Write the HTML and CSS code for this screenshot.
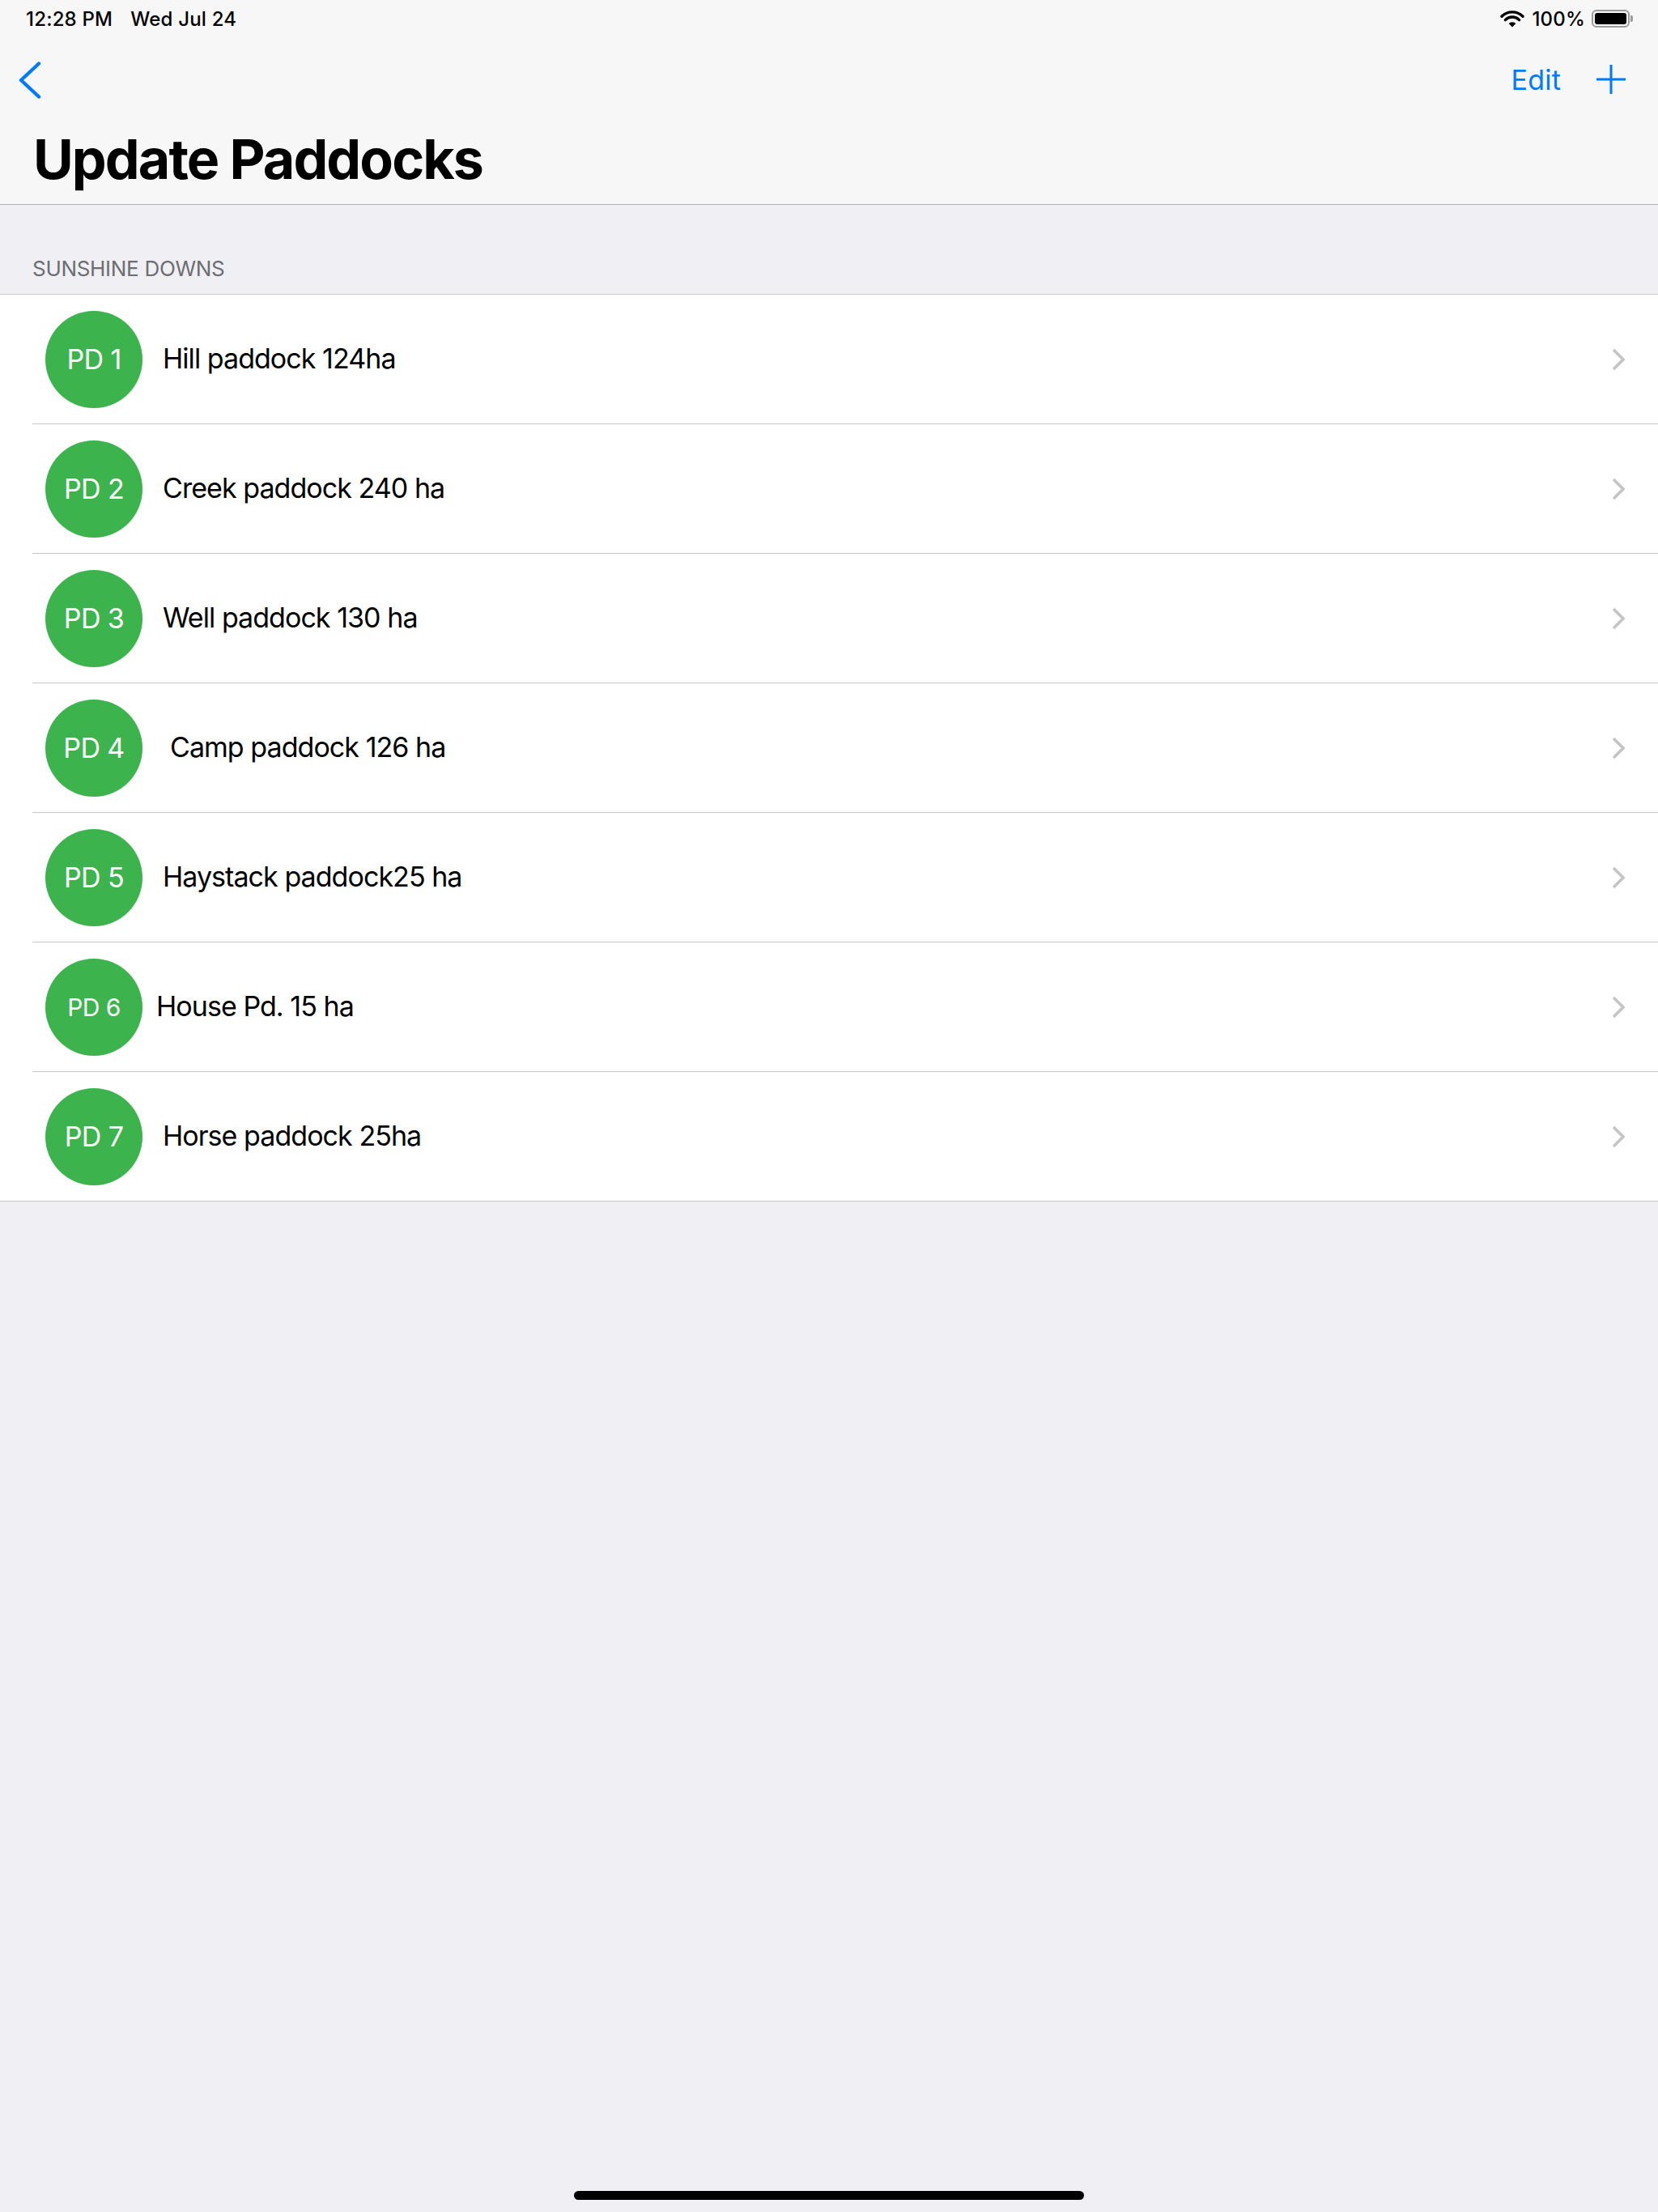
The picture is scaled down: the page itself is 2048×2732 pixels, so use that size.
FILE: index.html
```html
<!DOCTYPE html>
<html lang="en">
<head>
  <meta charset="UTF-8">
  <title>Update Paddocks</title>
  <link rel="stylesheet" href="styles.css">
</head>
<body>
  <!-- Top bar: status + navigation + large title -->
  <div id="header">
    <div id="status-bar">
      <div class="status-left">
        <span>12:28 PM</span>
        <span>Wed Jul 24</span>
      </div>
      <div class="status-right">
        <svg class="wifi" width="30" height="22" viewBox="0 0 30 22">
          <path d="M15 21.5 L10.6 16.9 A6.4 6.4 0 0 1 19.4 16.9 Z" fill="#000"/>
          <path d="M6.4 12.6 A12.2 12.2 0 0 1 23.6 12.6" stroke="#000" stroke-width="3.4" fill="none" stroke-linecap="round"/>
          <path d="M2 8.2 A18.5 18.5 0 0 1 28 8.2" stroke="#000" stroke-width="3.4" fill="none" stroke-linecap="round"/>
        </svg>
        <span class="battery-pct">100%</span>
        <span class="battery"><span class="battery-fill"></span></span>
        <span class="battery-nub"></span>
      </div>
    </div>

    <div id="nav">
      <svg class="back" width="32" height="46" viewBox="0 0 32 46">
        <path d="M28 2.5 L6 23 L28 43.5" stroke="#007aff" stroke-width="4.4" fill="none" stroke-linecap="round" stroke-linejoin="round"/>
      </svg>
      <div class="nav-actions">
        <span class="edit">Edit</span>
        <svg class="plus" width="36" height="36" viewBox="0 0 36 36">
          <path d="M18 0 V36 M0 18 H36" stroke="#007aff" stroke-width="3"/>
        </svg>
      </div>
    </div>

    <h1 class="title">Update Paddocks</h1>
  </div>

  <!-- Paddock list -->
  <div class="section-header">SUNSHINE DOWNS</div>
  <div id="list"></div>

  <div class="home-indicator"></div>

  <script>
    const paddocks = [
      { code: 'PD 1', name: 'Hill paddock 124ha' },
      { code: 'PD 2', name: 'Creek paddock 240 ha' },
      { code: 'PD 3', name: 'Well paddock 130 ha' },
      { code: 'PD 4', name: 'Camp paddock 126 ha', cls: 'shift-right' },
      { code: 'PD 5', name: 'Haystack paddock25 ha' },
      { code: 'PD 6', name: 'House Pd. 15 ha', cls: 'shift-left', small: true },
      { code: 'PD 7', name: 'Horse paddock 25ha' }
    ];

    const list = document.getElementById('list');
    paddocks.forEach(p => {
      const row = document.createElement('div');
      row.classList.add('row');

      const badge = document.createElement('div');
      badge.classList.add('badge');
      if (p.small) badge.classList.add('small');
      badge.innerText = p.code;
      row.appendChild(badge);

      const name = document.createElement('div');
      name.classList.add('name');
      if (p.cls) name.classList.add(p.cls);
      name.innerText = p.name;
      row.appendChild(name);

      const chev = document.createElementNS('http://www.w3.org/2000/svg', 'svg');
      chev.setAttribute('class', 'chevron');
      chev.setAttribute('width', '18');
      chev.setAttribute('height', '28');
      chev.setAttribute('viewBox', '0 0 18 28');
      chev.innerHTML = '<path d="M3 2 L15 14 L3 26" stroke="#c4c4c7" stroke-width="3.6" fill="none"/>';
      row.appendChild(chev);

      list.appendChild(row);
    });
  </script>
</body>
</html>
```

FILE: styles.css
```css
/* Base reset */
* { margin: 0; padding: 0; box-sizing: border-box; }
body {
  font-family: Inter, "Noto Sans", sans-serif;
  background-color: #efeff4; color: #000;
  width: 2048px; height: 2732px; overflow: hidden; position: relative;
}

/* Header */
#header {
  background-color: #f7f7f7; border-bottom: 1px solid #b2b2b5;
  height: 253px;
}

/* Status bar */
#status-bar {
  height: 40px; padding: 0 31px 0 32px;
  display: flex; justify-content: space-between; align-items: center;
  font-size: 24px; font-weight: 500; letter-spacing: 0.2px;
}
.status-left { display: flex; gap: 22px; padding-top: 6px; }
.status-right { display: flex; align-items: center; padding-top: 6px; }
.wifi { margin-right: 9px; }
.battery-pct { margin-right: 8px; }
.battery {
  width: 47px; height: 22px; border: 2px solid #9b9b9b; border-radius: 6px;
  padding: 2px; display: flex;
}
.battery-fill { flex: 1; background-color: #000; border-radius: 3px; }
.battery-nub {
  width: 3px; height: 8px; background-color: #9b9b9b;
  border-radius: 0 2px 2px 0; margin-left: 1px;
}

/* Navigation row */
#nav {
  height: 116px; padding: 0 40px 0 20px;
  display: flex; justify-content: space-between; align-items: center;
}
.back { margin-top: 2px; }
.nav-actions { display: flex; align-items: center; gap: 44px; }
.edit { font-size: 34px; color: #007aff; letter-spacing: 0.2px; }

/* Large title */
.title {
  font-size: 68px; font-weight: 700; letter-spacing: -1.9px;
  line-height: 80px; padding-left: 41px;
}

/* Section header */
.section-header {
  height: 110px; padding: 0 0 0 40px;
  display: flex; align-items: flex-end; padding-bottom: 16px;
  font-size: 26px; color: #6d6d72; letter-spacing: -0.3px;
}

/* List rows */
#list {
  background-color: #fff;
  border-top: 1px solid #c8c7cc; border-bottom: 1px solid #c8c7cc;
}
.row {
  height: 160px; margin-left: 40px; padding: 0 40px 0 16px;
  display: flex; align-items: center;
  border-bottom: 1px solid #c8c7cc;
}
.row:last-child { border-bottom: none; height: 159px; }
.badge {
  width: 120px; height: 120px; border-radius: 50%;
  background-color: #3db34e; color: #fff;
  display: flex; align-items: center; justify-content: center;
  font-size: 34px; font-weight: 400; letter-spacing: -0.6px; flex-shrink: 0;
}
.badge.small { font-size: 30px; }
.name {
  flex: 1; font-size: 34px; padding-left: 25px; padding-bottom: 3px;
  letter-spacing: -0.95px;
}
.name.shift-right { padding-left: 34px; }
.name.shift-left { padding-left: 17px; }

/* Home indicator */
.home-indicator {
  position: absolute; left: 709px; bottom: 15px;
  width: 630px; height: 11px; border-radius: 6px; background-color: #000;
}
```
